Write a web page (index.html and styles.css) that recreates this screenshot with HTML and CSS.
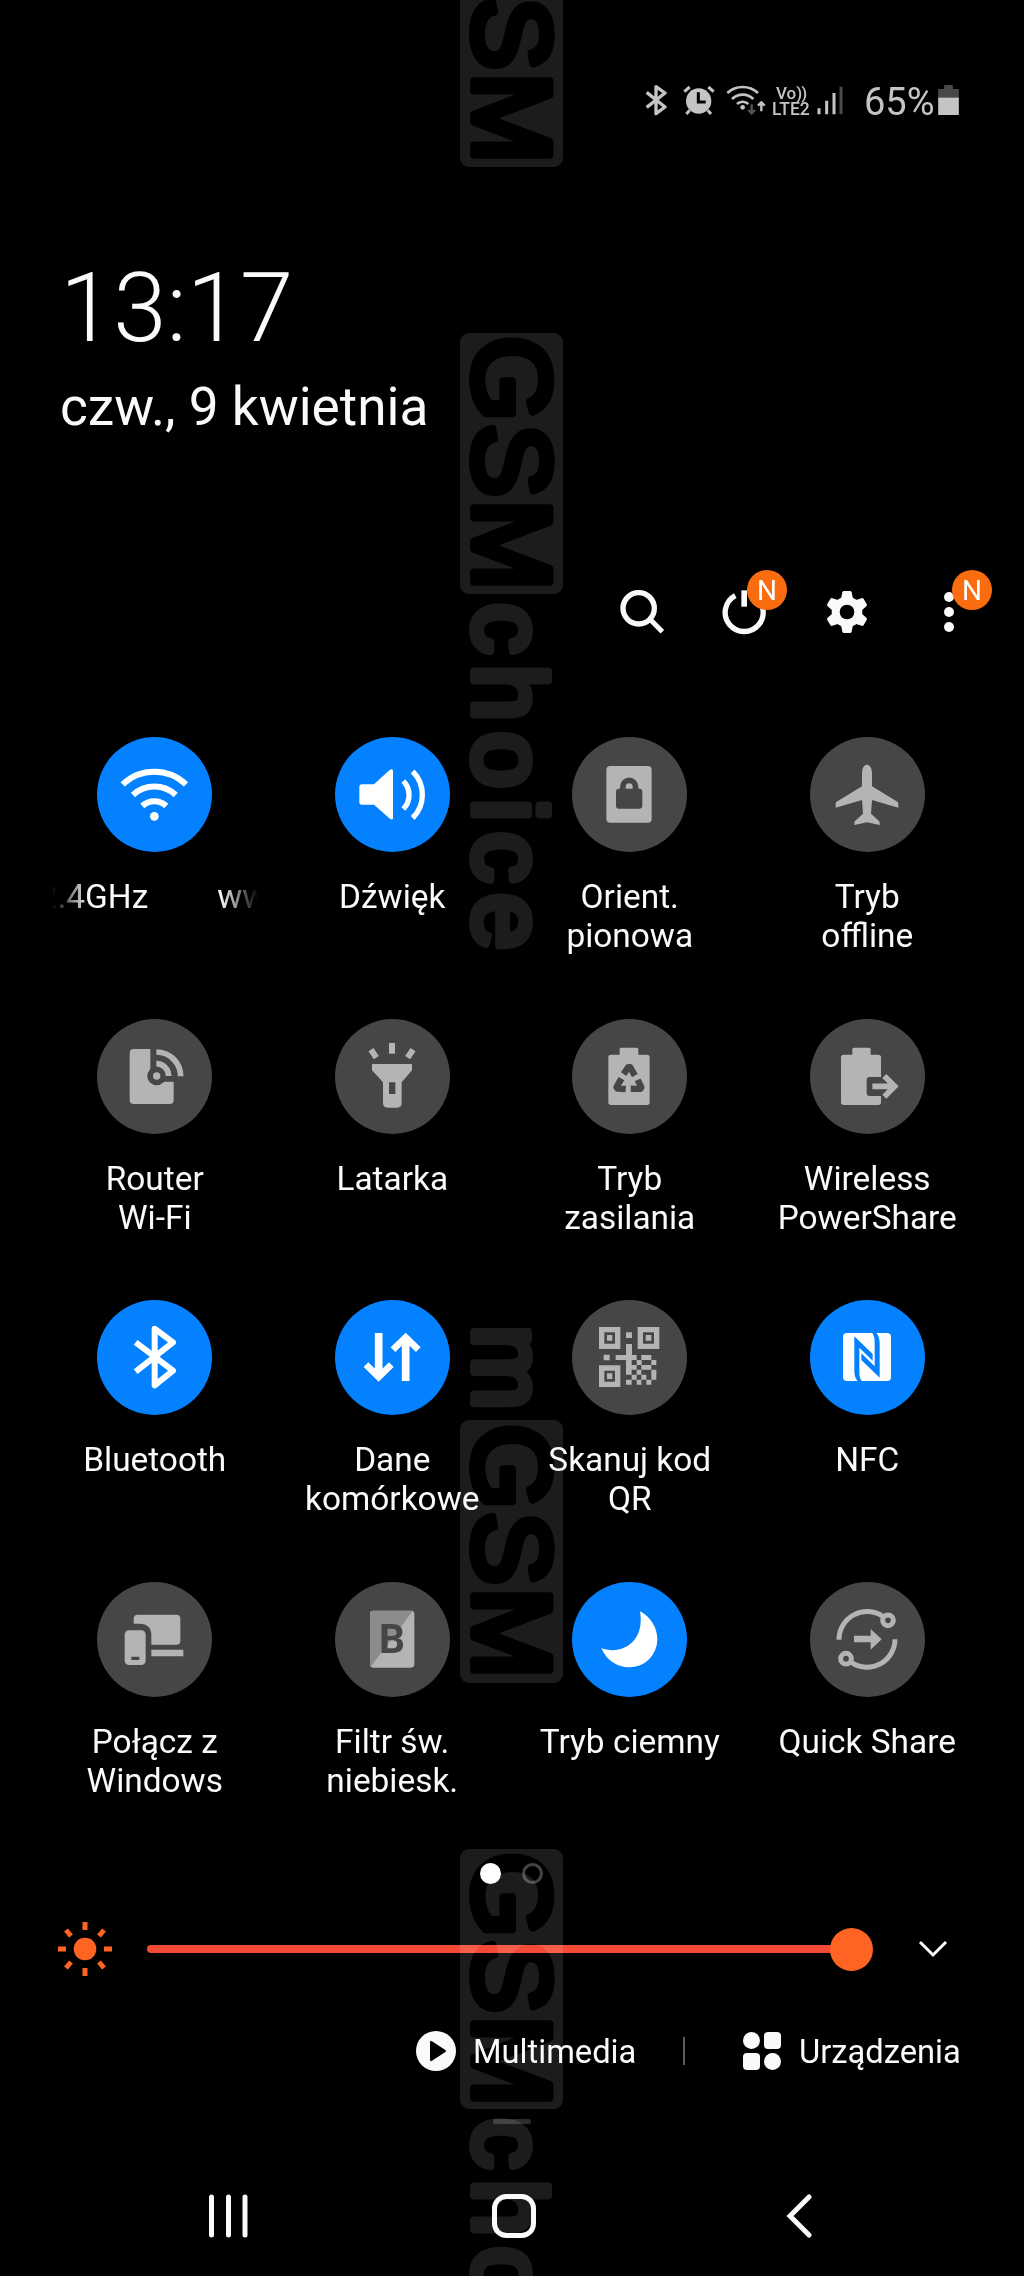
FILE: index.html
```html
<!DOCTYPE html>
<html lang="pl">
<head>
    <meta charset="UTF-8">
    <meta name="viewport" content="width=device-width, initial-scale=1.0">
    <title>Panel szybkich ustawień</title>
    <link rel="stylesheet" href="styles.css">
</head>
<body>
    <div class="phone">
        <div class="status-bar">
            <svg class="st-bt" viewBox="0 0 66 96"><path d="M5 25L60 69 33 89V8L60 27 5 70" fill="none" stroke="#c4c4c4" stroke-width="10" stroke-linejoin="round"/></svg>
            <svg class="st-alarm" viewBox="0 0 96 90">
                <circle cx="47" cy="48" r="38" fill="#c4c4c4"/>
                <path d="M4 20L20 6M92 20L76 6M20 76L10 87M74 76L84 87" stroke="#c4c4c4" stroke-width="9"/>
                <path d="M46 22v29h22" fill="none" stroke="#000" stroke-width="9"/>
            </svg>
            <svg class="st-wifi" viewBox="0 0 120 90">
                <g fill="none" stroke="#c4c4c4" stroke-width="8">
                    <path d="M4 24a68 68 0 0 1 92 0M18 42a46 46 0 0 1 64 0M33 57a25 25 0 0 1 34 0"/>
                    <path d="M106 79V53M96 62l10-10 10 10" stroke-width="7"/>
                    <path d="M77 58v26M67 75l10 10 10-10" stroke="#555" stroke-width="7"/>
                </g>
                <circle cx="50" cy="67" r="7" fill="#c4c4c4"/>
            </svg>
            <div class="st-volte"><span>Vo<i>))</i></span><span>LTE2</span></div>
            <svg class="st-signal" viewBox="0 0 78 90">
                <path d="M6 70v18M29 47v41M51 24v64" stroke="#c4c4c4" stroke-width="9"/>
                <path d="M72 5v83" stroke="#4a4a4a" stroke-width="9"/>
            </svg>
            <span class="st-percent">65%</span>
            <svg class="st-battery" viewBox="0 0 62 90">
                <path d="M18 0h26v12h18v28H0V12h18z" fill="#484848"/>
                <path d="M0 38h62v52H0z" fill="#c4c4c4"/>
            </svg>
        </div>

        <div class="clock">13:17</div>
        <div class="date">czw., 9 kwietnia</div>

        <div class="actions">
            <div class="action">
                <svg viewBox="0 0 150 150"><g fill="none" stroke="#fafafa"><circle cx="65" cy="64" r="47" stroke-width="16"/><path d="M99 97l37 37" stroke-width="15"/></g></svg>
            </div>
            <div class="action">
                <svg viewBox="0 0 150 150"><path d="M49 26A57 57 0 1 0 102 26" fill="none" stroke="#fafafa" stroke-width="16"/><path d="M67 10h17v49H67z" fill="#fafafa"/></svg>
                <span class="badge">N</span>
            </div>
            <div class="action">
                <svg viewBox="0 0 150 150">
                    <g fill="#fafafa">
                        <circle cx="75" cy="75" r="46"/>
                        <path id="tooth" d="M57 36l4-20q1-4 5-4h18q4 0 5 4l4 20z"/>
                        <use href="#tooth" transform="rotate(60 75 75)"/>
                        <use href="#tooth" transform="rotate(120 75 75)"/>
                        <use href="#tooth" transform="rotate(180 75 75)"/>
                        <use href="#tooth" transform="rotate(240 75 75)"/>
                        <use href="#tooth" transform="rotate(300 75 75)"/>
                    </g>
                    <circle cx="75" cy="75" r="22" fill="#000"/>
                </svg>
            </div>
            <div class="action">
                <svg viewBox="0 0 150 150"><g fill="#fafafa"><circle cx="75" cy="30" r="15"/><circle cx="75" cy="75" r="15"/><circle cx="75" cy="120" r="15"/></g></svg>
                <span class="badge">N</span>
            </div>
        </div>

        <div class="tiles">
            <div class="tile on">
                <svg viewBox="0 0 345 345"><g fill="none" stroke="#fff" stroke-width="18"><path d="M77 142a138 138 0 0 1 190 0M108 174a94 94 0 0 1 128 0M136 207a53 53 0 0 1 72 0"/></g><circle cx="172" cy="238" r="13" fill="#fff"/></svg>
                <div class="marquee"><span>2.4GHz</span><span>www</span></div>
            </div>
            <div class="tile on">
                <svg viewBox="0 0 345 345"><path d="M73 150q0-8 8-8h36l46-42q11-8 11 2v140q0 10-11 2l-46-41H81q-8 0-8-8z" fill="#fff"/><path d="M205 132a60 60 0 0 1 0 84M233 103a99 99 0 0 1 0 140" fill="none" stroke="#fff" stroke-width="16"/></svg>
                <p>Dźwięk</p>
            </div>
            <div class="tile">
                <svg viewBox="0 0 345 345"><rect x="103" y="87" width="136" height="170" rx="12" fill="#b4b4b4"/><rect x="132" y="155" width="79" height="60" rx="9" fill="#464646"/><path d="M152.500 160v-11a19 19 0 0 1 38 0v11" fill="none" stroke="#464646" stroke-width="17"/></svg>
                <p>Orient.<br>pionowa</p>
            </div>
            <div class="tile">
                <svg viewBox="0 0 345 345"><path d="M171 83c10 0 15 14 15 25v40l76 46q4 3 3 8v10l-79-23-3 41 24 22q3 3 2 12l-38-8-38 8q-1-9 2-12l24-22-3-41-79 23v-10q-1-5 3-8l76-46v-40c0-11 5-25 15-25z" fill="#b4b4b4"/></svg>
                <p>Tryb<br>offline</p>
            </div>

            <div class="tile">
                <svg viewBox="0 0 345 345"><path d="M110 90h50v98h70v55q0 12-12 12H110q-12 0-12-12V102q0-12 12-12z" fill="#b4b4b4"/><circle cx="179" cy="171" r="28" fill="#464646"/><circle cx="179" cy="171" r="11" fill="#b4b4b4"/><path d="M178 134a37 37 0 0 1 37 37M178 99a73 73 0 0 1 73 73" fill="none" stroke="#b4b4b4" stroke-width="17"/></svg>
                <p>Router<br>Wi-Fi</p>
            </div>
            <div class="tile">
                <svg viewBox="0 0 345 345"><path d="M111 135h120v19l-31 36v62q0 14-14 14h-28q-14 0-14-14v-62l-33-36z" fill="#b4b4b4"/><path d="M162 190h19v35h-19z" fill="#464646"/><path d="M171 72v32M108 92l16 24M234 92l-16 24" stroke="#b4b4b4" stroke-width="18"/></svg>
                <p>Latarka</p>
            </div>
            <div class="tile">
                <svg viewBox="0 0 345 345">
                    <rect x="109" y="107" width="124" height="151" rx="8" fill="#b4b4b4"/><rect x="143" y="86" width="56" height="30" rx="5" fill="#b4b4b4"/>
                    <g fill="#464646">
                        <path id="loop" d="M147 160l14-21q3-4 8-4h5q5 0 8 4l15 26-17 10-9-17-8 13z"/>
                        <use href="#loop" transform="rotate(120 171 186)"/>
                        <use href="#loop" transform="rotate(240 171 186)"/>
                    </g>
                </svg>
                <p>Tryb<br>zasilania</p>
            </div>
            <div class="tile">
                <svg viewBox="0 0 345 345"><rect x="93" y="107" width="120" height="151" rx="8" fill="#b4b4b4"/><rect x="127" y="86" width="55" height="30" rx="5" fill="#b4b4b4"/><rect x="170" y="174" width="60" height="57" rx="9" fill="#464646"/><path d="M187 202h64M223 171l31 31-31 31" fill="none" stroke="#b4b4b4" stroke-width="17"/></svg>
                <p>Wireless<br>PowerShare</p>
            </div>

            <div class="tile on">
                <svg viewBox="0 0 345 345"><path d="M116 127L228 212 173 256V86L228 127 116 215" fill="none" stroke="#fff" stroke-width="18" stroke-linejoin="round"/></svg>
                <p>Bluetooth</p>
            </div>
            <div class="tile on">
                <svg viewBox="0 0 345 345"><g fill="none" stroke="#fff"><path d="M131 99v130M212 243V113" stroke-width="23"/><path d="M93 194l38 37 38-37M174 149l38-37 38 37" stroke-width="20"/></g></svg>
                <p>Dane<br>komórkowe</p>
            </div>
            <div class="tile">
                <svg viewBox="0 0 345 345">
                    <path d="M89 89h48v50H89zM205 89h49v50h-49zM89 204h48v49H89z" fill="none" stroke="#b4b4b4" stroke-width="16"/>
                    <path d="M105 105h16v17h-16zM221 105h17v17h-17zM105 220h16v17h-16zM162 97h18v17h-18zM95 164h18v17H95zM162 132h18v33h-18zM131 165h31v15h-31zM162 165h17v15h-17zM179 165h15v15h-15zM208 165h30v15h-30zM162 180h17v15h-17zM194 180h15v15h-15zM238 180h15v15h-15zM162 195h32v14h-32zM208 195h30v14h-30zM162 209h17v15h-17zM194 209h14v15h-14zM238 209h15v15h-15zM179 224h15v15h-15zM208 224h15v15h-15zM238 224h15v15h-15zM162 239h17v15h-17zM194 239h14v15h-14zM223 239h15v15h-15z" fill="#b4b4b4"/>
                </svg>
                <p>Skanuj kod<br>QR</p>
            </div>
            <div class="tile on">
                <svg viewBox="0 0 345 345">
                    <rect x="99" y="99" width="144" height="144" rx="12" fill="#fff"/>
                    <path id="nfc" d="M133 109L188 162V182L148 143V215Q148 235 156 244H143Q133 232 133 213z" fill="#0381fe"/>
                    <use href="#nfc" transform="rotate(180 171 171)"/>
                </svg>
                <p>NFC</p>
            </div>

            <div class="tile">
                <svg viewBox="0 0 345 345"><path d="M122 98h116q12 0 12 12v66q0 12-12 12h-75v-28q0-35-36-35h-17v-15q0-12 12-12z" fill="#b4b4b4"/><rect x="83" y="145" width="63" height="104" rx="13" fill="#b4b4b4"/><path d="M103 224h24v10h-24z" fill="#464646"/><path d="M163 203h96v20h-96z" fill="#b4b4b4"/></svg>
                <p>Połącz z<br>Windows</p>
            </div>
            <div class="tile">
                <svg viewBox="0 0 345 345"><rect x="105" y="86" width="133" height="171" rx="10" fill="#b4b4b4"/><path d="M115 86h119L107 254q-2-3-2-7V96q0-10 10-10z" fill="#8c8c8c"/><text x="132" y="212" class="letter-b">B</text></svg>
                <p>Filtr św.<br>niebiesk.</p>
            </div>
            <div class="tile on">
                <svg viewBox="0 0 345 345"><path d="M204 88C236 104 256 138 256 172a84 84 0 0 1-84 84C136 256 104 236 88 199 150 220 220 180 204 88z" fill="#fff"/></svg>
                <p>Tryb ciemny</p>
            </div>
            <div class="tile">
                <svg viewBox="0 0 345 345"><g fill="none" stroke="#b4b4b4" stroke-width="15"><path d="M87 173A84 84 0 0 1 218 103M255 172A84 84 0 0 1 125 242"/><circle cx="234" cy="115" r="16"/><circle cx="108" cy="230" r="16"/></g><path d="M132 161h50v-20l33 31-33 31v-22h-50z" fill="#b4b4b4"/></svg>
                <p>Quick Share</p>
            </div>
        </div>

        <div class="pages"><span class="dot active"></span><span class="dot"></span></div>

        <div class="brightness">
            <svg class="sun" viewBox="0 0 56 56">
                <circle cx="28" cy="28" r="11.300" fill="#ff6422"/>
                <path d="M28 1v8M28 47v8M1 28h8M47 28h8M9 9l5 6M47 9l-5 6M9 47l5-6M47 47l-5-6" stroke="#ff6422" stroke-width="5"/>
            </svg>
            <div class="slider"><span class="thumb"></span></div>
            <svg class="chevron" viewBox="0 0 30 18"><path d="M2 2l13 13L28 2" fill="none" stroke="#fafafa" stroke-width="3"/></svg>
        </div>

        <div class="shortcuts">
            <svg class="play" viewBox="0 0 40 40"><circle cx="20" cy="20" r="20" fill="#fafafa"/><path d="M14 11.500q0-2.500 2-1.300l13 8.500q2 1.300 0 2.600l-13 8.500q-2 1.200-2-1.300z" fill="#000"/></svg>
            <span class="media">Multimedia</span>
            <span class="divider"></span>
            <svg class="grid-icon" viewBox="0 0 38 38"><g fill="#fafafa"><circle cx="8.500" cy="8.500" r="8.500"/><rect x="21" width="17" height="17" rx="4"/><rect y="21" width="17" height="17" rx="4"/><circle cx="29.500" cy="29.500" r="8.500"/></g></svg>
            <span class="devices">Urządzenia</span>
        </div>

        <div class="handle"></div>

        <div class="nav">
            <svg class="recents" viewBox="0 0 40 44"><path d="M3.500 3v38M20.500 3v38M37 3v38" stroke="#fafafa" stroke-width="5" stroke-linecap="round"/></svg>
            <svg class="home" viewBox="0 0 44 44"><rect x="2.500" y="2.500" width="39" height="39" rx="12" fill="none" stroke="#fafafa" stroke-width="5"/></svg>
            <svg class="back" viewBox="0 0 26 44"><path d="M23 3L4 22l19 19" fill="none" stroke="#fafafa" stroke-width="5" stroke-linecap="round"/></svg>
        </div>
    </div>

    <!-- vertical watermark over the whole screen -->
    <svg class="watermark" viewBox="0 0 104 2276">
        <rect x="0" y="-94" width="103" height="261" rx="9"/>
        <rect x="0" y="333" width="103" height="261" rx="9"/>
        <rect x="0" y="1420" width="103" height="263" rx="9"/>
        <rect x="0" y="1849" width="103" height="260" rx="9"/>
        <g class="cut">
            <text transform="translate(14 -91) rotate(90)" textLength="255">GSM</text>
            <text transform="translate(14 336) rotate(90)" textLength="255">GSM</text>
            <text transform="translate(14 1424) rotate(90)" textLength="255">GSM</text>
            <text transform="translate(14 1852) rotate(90)" textLength="255">GSM</text>
        </g>
        <g class="solid">
            <text transform="translate(14 603) rotate(90)" textLength="347">choice</text>
            <text transform="translate(14 1325) rotate(90)">m</text>
            <text transform="translate(14 2118) rotate(90)" textLength="347">choice</text>
        </g>
    </svg>
</body>
</html>
```
FILE: styles.css
```css
* {
    box-sizing: border-box;
}
body {
    margin: 0;
    background-color: #000;
    color: #fafafa;
    font-family: Roboto, sans-serif;
}
svg {
    display: block;
    flex: none;
}
.phone {
    width: 1024px;
    height: 2276px;
    overflow: hidden;
}
.status-bar {
    display: flex;
    align-items: flex-start;
    height: 243px;
    padding: 84px 0 0 645px;
    color: #c4c4c4;
}
.st-bt {
    width: 22px;
    height: 32px;
}
.st-alarm {
    width: 32px;
    height: 30px;
    margin: 1px 0 0 16px;
}
.st-wifi {
    width: 40px;
    height: 30px;
    margin: 1px 0 0 11px;
}
.st-volte {
    width: 39px;
    margin: 1px 0 0 6px;
    font-size: 17.500px;
    font-weight: 500;
    line-height: 16px;
}
.st-volte span {
    display: block;
    white-space: nowrap;
}
.st-volte span:first-child {
    padding-left: 4px;
    font-size: 17px;
}
.st-volte i {
    font-style: normal;
    letter-spacing: -1px;
}
.st-signal {
    width: 26px;
    height: 30px;
    margin: 1px 0 0 6px;
}
.st-percent {
    width: 70px;
    margin: -4px 0 0 21px;
    font-size: 38px;
    line-height: 44px;
}
.st-battery {
    width: 21px;
    height: 30px;
    margin: 1px 0 0 4px;
}
.clock {
    height: 130px;
    padding-left: 60px;
    font-size: 96px;
    font-weight: 300;
    line-height: 131px;
}
.date {
    height: 68px;
    padding-left: 60px;
    font-size: 53.200px;
    line-height: 68px;
}
.actions {
    display: flex;
    justify-content: flex-end;
    gap: 52.500px;
    margin-top: 146px;
    padding-right: 50px;
}
.action {
    position: relative;
    width: 50px;
    height: 50px;
}
.action svg {
    width: 50px;
    height: 50px;
}
.badge {
    position: absolute;
    top: -17px;
    left: 28px;
    width: 40px;
    height: 40px;
    border-radius: 50%;
    background-color: #f96d10;
    color: #fff;
    font-size: 28px;
    line-height: 41px;
    text-align: center;
}
.tiles {
    display: grid;
    grid-template-columns: repeat(4, 237.500px);
    grid-auto-rows: 281.700px;
    margin-top: 100px;
    padding-left: 36px;
}
.tile {
    display: flex;
    flex-direction: column;
    align-items: center;
}
.tile svg {
    width: 115px;
    height: 115px;
    border-radius: 50%;
    background-color: #464646;
}
.tile.on svg {
    background-color: #0381fe;
}
.tile p,
.marquee {
    margin: 25px 0 0;
    font-size: 33.400px;
    line-height: 39px;
    text-align: center;
    white-space: nowrap;
}
.marquee {
    display: flex;
    gap: 69px;
    width: 206px;
    overflow: hidden;
    -webkit-mask-image: linear-gradient(to right, transparent, #000 18%, #000 82%, transparent);
    mask-image: linear-gradient(to right, transparent, #000 18%, #000 82%, transparent);
}
.marquee span:first-child {
    margin-left: -13px;
}
.letter-b {
    font-size: 122px;
    font-weight: 700;
    fill: #464646;
}
.pages {
    display: flex;
    gap: 21px;
    margin-top: -1px;
    padding-left: 480px;
}
.dot {
    width: 21px;
    height: 21px;
    border: 3px solid #444;
    border-radius: 50%;
}
.dot.active {
    border: 0;
    background-color: #fff;
}
.brightness {
    display: flex;
    align-items: center;
    height: 56px;
    margin-top: 37px;
    padding-left: 57px;
}
.sun {
    width: 56px;
    height: 56px;
}
.slider {
    position: relative;
    width: 718px;
    height: 8px;
    margin-left: 34px;
    border-radius: 4px;
    background-color: #f54a35;
}
.thumb {
    position: absolute;
    top: -17px;
    right: -8px;
    width: 43px;
    height: 43px;
    border-radius: 50%;
    background-color: #ff6422;
}
.chevron {
    width: 30px;
    height: 18px;
    margin-left: 53px;
}
.shortcuts {
    display: flex;
    align-items: center;
    height: 44px;
    margin-top: 52px;
    padding-left: 416px;
    font-size: 32.700px;
    line-height: 44px;
}
.play {
    width: 40px;
    height: 40px;
}
.media {
    width: 166px;
    margin-left: 17px;
    padding-top: 2px;
}
.divider {
    width: 2px;
    height: 28px;
    margin-left: 44px;
    background-color: #5c5c5c;
}
.grid-icon {
    width: 38px;
    height: 38px;
    margin-left: 58px;
}
.devices {
    margin-left: 18px;
    padding-top: 2px;
}
.handle {
    width: 38px;
    height: 5px;
    margin: 46px 0 0 493px;
    border-radius: 2px;
    background-color: #2c2c2c;
}
.nav {
    display: flex;
    align-items: center;
    height: 44px;
    margin-top: 70px;
    padding-left: 208px;
}
.recents {
    width: 40px;
    height: 44px;
}
.home {
    width: 44px;
    height: 44px;
    margin-left: 244px;
}
.back {
    width: 26px;
    height: 44px;
    margin-left: 250px;
}
.watermark {
    position: absolute;
    top: 0;
    left: 460px;
    width: 104px;
    height: 2276px;
    mix-blend-mode: screen;
    pointer-events: none;
    fill: #1c1c1c;
}
.watermark text {
    font-family: "Liberation Sans", Arial, sans-serif;
    font-size: 110px;
    stroke-width: 8;
    stroke-linejoin: round;
}
.cut {
    fill: #000;
    stroke: #000;
}
.watermark .solid text {
    font-size: 102px;
}
.solid {
    fill: #1c1c1c;
    stroke: #1c1c1c;
}
```
